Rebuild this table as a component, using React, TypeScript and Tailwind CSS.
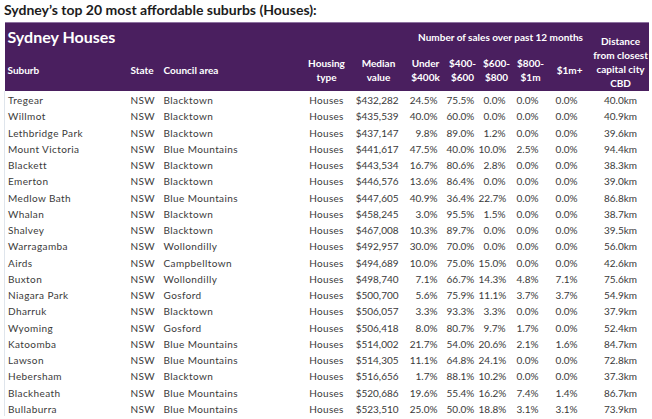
const ROWS: [string, string, string, string, string, string, string, string, string][] = [
  ["Tregear", "Blacktown", "$432,282", "24.5%", "75.5%", "0.0%", "0.0%", "0.0%", "40.0km"],
  ["Willmot", "Blacktown", "$435,539", "40.0%", "60.0%", "0.0%", "0.0%", "0.0%", "40.9km"],
  ["Lethbridge Park", "Blacktown", "$437,147", "9.8%", "89.0%", "1.2%", "0.0%", "0.0%", "39.6km"],
  ["Mount Victoria", "Blue Mountains", "$441,617", "47.5%", "40.0%", "10.0%", "2.5%", "0.0%", "94.4km"],
  ["Blackett", "Blacktown", "$443,534", "16.7%", "80.6%", "2.8%", "0.0%", "0.0%", "38.3km"],
  ["Emerton", "Blacktown", "$446,576", "13.6%", "86.4%", "0.0%", "0.0%", "0.0%", "39.0km"],
  ["Medlow Bath", "Blue Mountains", "$447,605", "40.9%", "36.4%", "22.7%", "0.0%", "0.0%", "86.8km"],
  ["Whalan", "Blacktown", "$458,245", "3.0%", "95.5%", "1.5%", "0.0%", "0.0%", "38.7km"],
  ["Shalvey", "Blacktown", "$467,008", "10.3%", "89.7%", "0.0%", "0.0%", "0.0%", "39.5km"],
  ["Warragamba", "Wollondilly", "$492,957", "30.0%", "70.0%", "0.0%", "0.0%", "0.0%", "56.0km"],
  ["Airds", "Campbelltown", "$494,689", "10.0%", "75.0%", "15.0%", "0.0%", "0.0%", "42.6km"],
  ["Buxton", "Wollondilly", "$498,740", "7.1%", "66.7%", "14.3%", "4.8%", "7.1%", "75.6km"],
  ["Niagara Park", "Gosford", "$500,700", "5.6%", "75.9%", "11.1%", "3.7%", "3.7%", "54.9km"],
  ["Dharruk", "Blacktown", "$506,057", "3.3%", "93.3%", "3.3%", "0.0%", "0.0%", "37.9km"],
  ["Wyoming", "Gosford", "$506,418", "8.0%", "80.7%", "9.7%", "1.7%", "0.0%", "52.4km"],
  ["Katoomba", "Blue Mountains", "$514,002", "21.7%", "54.0%", "20.6%", "2.1%", "1.6%", "84.7km"],
  ["Lawson", "Blue Mountains", "$514,305", "11.1%", "64.8%", "24.1%", "0.0%", "0.0%", "72.8km"],
  ["Hebersham", "Blacktown", "$516,656", "1.7%", "88.1%", "10.2%", "0.0%", "0.0%", "37.3km"],
  ["Blackheath", "Blue Mountains", "$520,686", "19.6%", "55.4%", "16.2%", "7.4%", "1.4%", "86.7km"],
  ["Bullaburra", "Blue Mountains", "$523,510", "25.0%", "50.0%", "18.8%", "3.1%", "3.1%", "73.9km"],
];

export default function App() {
  return (
    <div className="w-[652px] h-[419px] overflow-hidden bg-white" style={{ fontFamily: "Lato, 'Open Sans', sans-serif" }}>
      <div className="h-[22px] pl-[4px] text-[14px] leading-[20px] font-bold text-[#1c1c1c]">
        Sydney’s top 20 most affordable suburbs (Houses):
      </div>

      <table className="ml-[4px] w-[644px] table-fixed border-collapse">
        <colgroup>
          <col className="w-[123px]" />
          <col className="w-[33px]" />
          <col className="w-[140px]" />
          <col className="w-[52px]" />
          <col className="w-[52px]" />
          <col className="w-[42px]" />
          <col className="w-[32px]" />
          <col className="w-[36px]" />
          <col className="w-[32px]" />
          <col className="w-[46px]" />
          <col className="w-[56px]" />
        </colgroup>

        <thead className="bg-[#4a1f5f] text-white text-[10px] font-bold">
          <tr className="h-[26px] border-t border-[#8d72a0]">
            <th colSpan={5} className="text-left align-middle pl-[3px] pt-[3px] text-[16px] leading-[20px] font-bold">
              Sydney Houses
            </th>
            <th colSpan={5} className="text-center align-middle pt-[3px] pl-[4px] text-[10px] leading-[14px] whitespace-nowrap">
              Number of sales over past 12 months
            </th>
            <th rowSpan={2} className="text-center align-bottom pb-[1px] leading-[14px] whitespace-nowrap">
              Distance
              <br />
              from closest
              <br />
              capital city
              <br />
              CBD
            </th>
          </tr>
          <tr className="h-[42px] leading-[14px]">
            <th className="text-left align-middle pl-[3px]">Suburb</th>
            <th className="text-left align-middle pl-[3px]">State</th>
            <th className="text-left align-middle pl-[3px]">Council area</th>
            <th className="text-center align-middle">
              Housing
              <br />
              type
            </th>
            <th className="text-center align-middle">
              Median
              <br />
              value
            </th>
            <th className="text-center align-middle">
              Under
              <br />
              $400k
            </th>
            <th className="text-center align-middle">
              $400-
              <br />
              $600
            </th>
            <th className="text-center align-middle">
              $600-
              <br />
              $800
            </th>
            <th className="text-center align-middle">
              $800-
              <br />
              $1m
            </th>
            <th className="text-center align-middle">$1m+</th>
          </tr>
        </thead>

        <tbody className="text-[10px] leading-[12px] text-[#3a3a3a]">
          {ROWS.map((r) => (
            <tr key={r[0]} className="h-[16.25px]">
              <td className="pl-[3px] pt-[3px] whitespace-nowrap tracking-[0.4px] border-l border-[#dfe5ec]">{r[0]}</td>
              <td className="pl-[3px] pt-[3px] tracking-[0.3px]">NSW</td>
              <td className="pl-[3px] pt-[3px] whitespace-nowrap tracking-[0.4px]">{r[1]}</td>
              <td className="text-center pt-[3px] tracking-[0.3px]">Houses</td>
              <td className="text-right pr-[6px] pt-[3px]">{r[2]}</td>
              <td className="text-right pr-[9px] pt-[3px]">{r[3]}</td>
              <td className="text-right pr-[10px] pt-[3px] whitespace-nowrap">{r[4]}</td>
              <td className="text-right pr-[9px] pt-[3px]">{r[5]}</td>
              <td className="text-right pr-[8px] pt-[3px]">{r[6]}</td>
              <td className="text-right pr-[15px] pt-[3px]">{r[7]}</td>
              <td className="text-center pt-[3px]">{r[8]}</td>
            </tr>
          ))}
        </tbody>
      </table>
    </div>
  );
}
